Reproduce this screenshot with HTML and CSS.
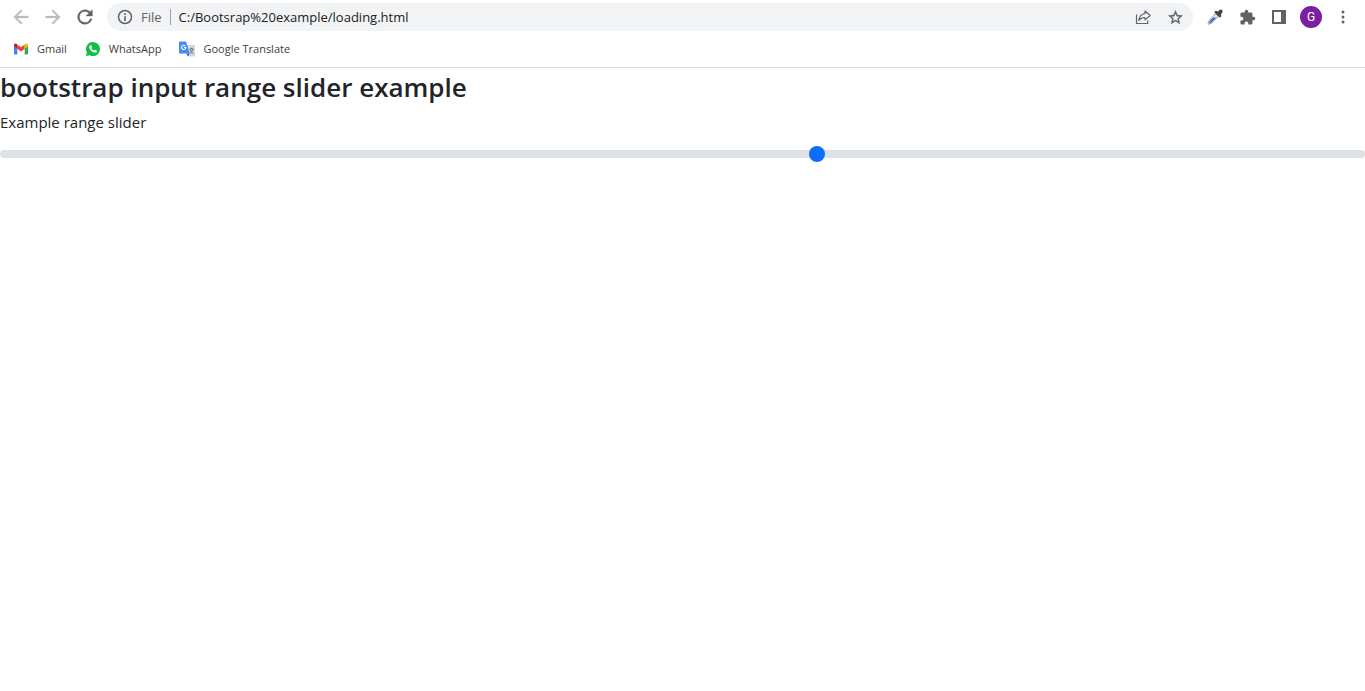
FILE: index.html
```html
<!DOCTYPE html>
<html lang="en">
<head>
<meta charset="utf-8">
<meta name="viewport" content="width=device-width, initial-scale=1">
<title>loading.html</title>
<link rel="stylesheet" href="styles.css">
</head>
<body>
<header class="browser">
  <div class="toolbar">
    <nav class="group" aria-label="History">
      <button class="tool disabled" type="button" aria-label="Back"><svg width="22" height="22" viewBox="0 0 24 24"><path fill="currentColor" stroke="currentColor" stroke-width=".4" d="M20 11H7.800l5.600-5.600L12 4l-8 8 8 8 1.400-1.400L7.800 13H20z"/></svg></button>
      <button class="tool disabled" type="button" aria-label="Forward"><svg width="22" height="22" viewBox="0 0 24 24"><path fill="currentColor" stroke="currentColor" stroke-width=".4" d="M12 4l-1.400 1.400 5.600 5.600H4v2h12.200l-5.600 5.600L12 20l8-8z"/></svg></button>
      <button class="tool" type="button" aria-label="Reload"><svg width="22" height="22" viewBox="0 0 24 24"><path fill="currentColor" stroke="currentColor" stroke-width=".4" d="M17.650 6.350A8 8 0 1 0 19.730 14h-2.080A6 6 0 1 1 12 6c1.660 0 3.140.690 4.220 1.780L13 11h7V4z"/></svg></button>
    </nav>
    <div class="omnibox">
      <svg class="info" width="16" height="16" viewBox="0 0 16 16" aria-hidden="true"><circle cx="8" cy="8" r="6.500" fill="none" stroke="currentColor" stroke-width="1.500"/><path fill="currentColor" d="M7.200 4.200h1.600v1.700H7.200zM7.200 7.200h1.600v4.700H7.200z"/></svg>
      <span class="scheme">File</span>
      <input class="address" type="text" aria-label="Address" value="C:/Bootsrap%20example/loading.html">
      <button class="tool" type="button" aria-label="Share"><svg width="18" height="18" viewBox="0 0 18 18" fill="none" stroke="currentColor" stroke-width="1.200"><path d="M2.500 6.500v9h11.200v-3"/><path stroke-linejoin="round" d="M11 3l5.200 4.500-5.200 4.400V9.500c-3 0-4.700.9-6.200 3 .5-3.700 2.500-6.400 6.200-7z"/></svg></button>
      <button class="tool" type="button" aria-label="Bookmark"><svg width="17" height="17" viewBox="0 0 24 24"><path fill="currentColor" stroke="currentColor" stroke-width=".5" d="M22 9.240l-7.190-.620L12 2 9.190 8.630 2 9.240l5.460 4.730L5.820 21 12 17.270 18.180 21l-1.630-7.030zM12 15.400l-3.760 2.270 1-4.280-3.320-2.880 4.380-.380L12 6.100l1.710 4.040 4.380.380-3.320 2.880 1 4.280z"/></svg></button>
    </div>
    <div class="group">
      <button class="tool" type="button" aria-label="Color picker"><svg width="16" height="16" viewBox="0 0 16 16"><path d="M8.300 4.800l2.900 2.900-6.500 6.400-2.700 1-1 .2.200-1.100 1-2.800z" fill="#e4e7ee" stroke="#8a8e98" stroke-width=".8"/><path d="M6.300 8.400l2.900.4-5 4.800-2 .8.700-2.300z" fill="#3a5fd0"/><path d="M7.200 3.300l1.800-1.700 1.800 1.100C11.900 1.300 13.500-.3 15 .9c1.400 1.200.5 3.100-1.300 4.600l.8 1.600L12.800 8.800z" fill="#414348"/></svg></button>
      <button class="tool" type="button" aria-label="Extensions"><svg width="17" height="17" viewBox="0 0 24 24"><path fill="currentColor" d="M20.500 11H19V7a2 2 0 0 0-2-2h-4V3.500a2.500 2.500 0 0 0-5 0V5H4a2 2 0 0 0-2 2v3.800h1.500a2.700 2.700 0 0 1 0 5.400H2V20a2 2 0 0 0 2 2h3.800v-1.500a2.700 2.700 0 0 1 5.400 0V22H17a2 2 0 0 0 2-2v-4h1.500a2.500 2.500 0 0 0 0-5z"/></svg></button>
      <button class="tool" type="button" aria-label="Side panel"><svg width="14" height="14" viewBox="0 0 14 14"><path fill="currentColor" fill-rule="evenodd" d="M0 0h14v14H0zM2 2v10h7V2z"/></svg></button>
      <button class="tool" type="button" aria-label="Profile"><span class="avatar">G</span></button>
      <button class="tool" type="button" aria-label="Menu"><svg width="4" height="14" viewBox="0 0 4 14" fill="currentColor"><circle cx="2" cy="2" r="1.500"/><circle cx="2" cy="7" r="1.500"/><circle cx="2" cy="12" r="1.500"/></svg></button>
    </div>
  </div>
  <nav class="bookmarks" aria-label="Bookmarks">
    <a class="bookmark" href="#"><svg width="16" height="16" viewBox="0 0 16 16"><path fill="#4285f4" d="M1 4v8.500c0 .6.400 1 1 1h2.300V6.300z"/><path fill="#34a853" d="M11.700 6.300v7.200H14c.6 0 1-.4 1-1V4z"/><path fill="#ea4335" d="M4.300 3.500L8 6.300l3.700-2.800v4.300L8 10.600 4.300 7.800z"/><path fill="#c5221f" d="M1 4c0-1.500 1.600-1.900 2.500-1.200l.8.700v4.300L1 5.300z"/><path fill="#fbbc04" d="M15 4c0-1.500-1.600-1.900-2.500-1.200l-.8.700v4.300L15 5.300z"/></svg>Gmail</a>
    <a class="bookmark" href="#"><svg width="16" height="16" viewBox="0 0 16 16"><path fill="#0fc143" d="M8 1a7 7 0 1 1-3.300 13.200L1 15l.9-3.500A7 7 0 0 1 8 1z"/><path fill="#fff" d="M5.300 4.300l1-.1.900 2-.7 1c.7 1.200 1.400 1.900 2.600 2.400l.9-.9 2 1c.1 1.200-1 2-2.300 1.900-2.600-.4-5.100-2.800-5.500-5.200-.1-.9.400-1.800 1.100-2.100z"/></svg>WhatsApp</a>
    <a class="bookmark" href="#"><svg width="16" height="16" viewBox="0 0 16 16"><path fill="#d3d6da" d="M6 4h9c.6 0 1 .4 1 1v9.500c0 .6-.4 1-1 1H9.500z"/><path fill="#3367d6" d="M7 12.500h3.800l-1.600 3z"/><path fill="#4a8af4" d="M1 .5h6l3.800 12H1c-.6 0-1-.4-1-1v-10c0-.6.4-1 1-1z"/><path fill="none" stroke="#fff" stroke-width="1.100" d="M6.200 4.900a2.100 2.100 0 1 0 .6 1.600H4.900"/><path fill="none" stroke="#67777f" d="M10.500 8h4.200M12.500 6.800V8M13.800 8c-.4 2-1.400 3.600-2.600 4.500M11.300 9c.6 1.600 1.600 2.800 3.100 3.700"/></svg>Google Translate</a>
  </nav>
</header>
<main>
  <h3 class="title">bootstrap input range slider example</h3>
  <label class="form-label" for="range">Example range slider</label>
  <input class="form-range" id="range" type="range" min="0" max="5" step="1" value="3">
</main>
</body>
</html>
```
FILE: styles.css
```css
* {
  box-sizing: border-box;
}

body {
  margin: 0;
  background: #fff;
  color: #212529;
  font-family: "Segoe UI", "Open Sans", "Noto Sans", sans-serif;
  font-size: 15px;
  line-height: 24px;
}

.browser {
  border-bottom: 1px solid #dadce0;
  color: #5f6368;
}

.toolbar {
  display: flex;
  align-items: center;
  gap: 6px;
  padding: 3px 6px 3px 5px;
}

.group {
  display: flex;
}

.tool {
  display: flex;
  align-items: center;
  justify-content: center;
  width: 32px;
  height: 28px;
  padding: 0;
  border: 0;
  background: none;
  color: #5f6368;
  font-family: inherit;
  flex: none;
}

.disabled {
  color: #babcbe;
}

.omnibox {
  display: flex;
  align-items: center;
  flex: 1;
  min-width: 0;
  height: 28px;
  padding: 0 2px 0 10px;
  border-radius: 14px;
  background: #f1f3f4;
  font-size: 13px;
}

.info {
  flex: none;
  margin-right: 8px;
}

.scheme {
  padding-right: 8px;
  border-right: 1px solid #9aa0a6;
  line-height: 16px;
}

.address {
  flex: 1;
  min-width: 0;
  padding: 0 0 0 8px;
  border: 0;
  outline: 0;
  background: none;
  color: #202124;
  font-family: inherit;
  font-size: 13px;
}

.avatar {
  width: 22px;
  height: 22px;
  border-radius: 50%;
  background: #7b1fa2;
  color: #fff;
  font-family: Roboto, sans-serif;
  font-size: 12px;
  line-height: 22px;
}

.bookmarks {
  display: flex;
  gap: 18px;
  padding: 3px 13px 6px;
}

.bookmark {
  display: flex;
  align-items: center;
  gap: 8px;
  color: #3c4043;
  font-size: 11px;
  text-decoration: none;
}

.title {
  margin: 0 0 4px;
  font-size: 26px;
  font-weight: 600;
  line-height: 38px;
}

.form-label {
  display: block;
  margin-bottom: 8px;
}

.form-range {
  display: block;
  width: 100%;
  height: 24px;
  margin: 0;
  background: none;
  appearance: none;
}

.form-range::-webkit-slider-runnable-track {
  height: 8px;
  border-radius: 16px;
  background: #dee2e6;
}

.form-range::-webkit-slider-thumb {
  width: 16px;
  height: 16px;
  margin-top: -4px;
  border-radius: 16px;
  background: #0d6efd;
  appearance: none;
}
```
